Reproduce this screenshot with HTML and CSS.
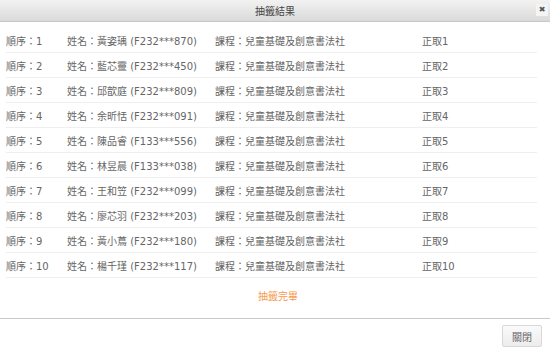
FILE: index.html
```html
<!DOCTYPE html>
<html lang="zh-Hant">
<head>
  <meta charset="UTF-8" />
  <title>抽籤結果</title>
  <link rel="stylesheet" href="styles.css">
</head>
<body>
  <div class="dialog">
    <div class="dialog-header">
      <span class="dialog-title">抽籤結果</span>
      <span class="dialog-close">✖</span>
    </div>
    <div class="dialog-body">
      <div class="result-list">
        <div class="result-row"><span class="col-no">順序：1</span><span class="col-name">姓名：黃姿瑀 (F232***870)</span><span class="col-course">課程：兒童基礎及創意書法社</span><span class="col-status">正取1</span></div>
        <div class="result-row"><span class="col-no">順序：2</span><span class="col-name">姓名：藍芯靈 (F232***450)</span><span class="col-course">課程：兒童基礎及創意書法社</span><span class="col-status">正取2</span></div>
        <div class="result-row"><span class="col-no">順序：3</span><span class="col-name">姓名：邱歆庭 (F232***809)</span><span class="col-course">課程：兒童基礎及創意書法社</span><span class="col-status">正取3</span></div>
        <div class="result-row"><span class="col-no">順序：4</span><span class="col-name">姓名：余昕恬 (F232***091)</span><span class="col-course">課程：兒童基礎及創意書法社</span><span class="col-status">正取4</span></div>
        <div class="result-row"><span class="col-no">順序：5</span><span class="col-name">姓名：陳品睿 (F133***556)</span><span class="col-course">課程：兒童基礎及創意書法社</span><span class="col-status">正取5</span></div>
        <div class="result-row"><span class="col-no">順序：6</span><span class="col-name">姓名：林昱晨 (F133***038)</span><span class="col-course">課程：兒童基礎及創意書法社</span><span class="col-status">正取6</span></div>
        <div class="result-row"><span class="col-no">順序：7</span><span class="col-name">姓名：王和笠 (F232***099)</span><span class="col-course">課程：兒童基礎及創意書法社</span><span class="col-status">正取7</span></div>
        <div class="result-row"><span class="col-no">順序：8</span><span class="col-name">姓名：廖芯羽 (F232***203)</span><span class="col-course">課程：兒童基礎及創意書法社</span><span class="col-status">正取8</span></div>
        <div class="result-row"><span class="col-no">順序：9</span><span class="col-name">姓名：黃小蔦 (F232***180)</span><span class="col-course">課程：兒童基礎及創意書法社</span><span class="col-status">正取9</span></div>
        <div class="result-row"><span class="col-no">順序：10</span><span class="col-name">姓名：楊千瑾 (F232***117)</span><span class="col-course">課程：兒童基礎及創意書法社</span><span class="col-status">正取10</span></div>
      </div>
      <div class="result-done">抽籤完畢</div>
    </div>
    <div class="dialog-footer">
      <button class="btn-close">關閉</button>
    </div>
  </div>
</body>
</html>
```

FILE: styles.css
```css
body {
  margin: 0;
  font-family: 'DejaVu Sans', 'Noto Sans CJK TC', sans-serif;
  font-size: 10px;
  color: #666;
  background-color: #fff;
}

.dialog {
  width: 550px;
  height: 359px;
  display: flex;
  flex-direction: column;
}

.dialog-header {
  height: 21px;
  border-bottom: 1px solid #c8c8c8;
  background: linear-gradient(to bottom, #f2f2f2, #dadada);
  display: flex;
  align-items: center;
  justify-content: center;
  position: relative;
}

.dialog-title {
  color: #444;
  font-size: 10px;
}

.dialog-close {
  position: absolute;
  right: 2px;
  top: 4px;
  width: 12px;
  height: 12px;
  background-color: #f4f4f4;
  color: #555;
  font-size: 8px;
  line-height: 12px;
  text-align: center;
}

.dialog-body {
  height: 297px;
  padding-top: 6px;
  border-bottom: 1px solid #c8c8c8;
  box-sizing: border-box;
}

.result-list {
  margin: 0 13px 0 6px;
}

.result-row {
  display: flex;
  align-items: center;
  height: 24px;
  border-bottom: 1px solid #efefef;
}

.col-no {
  width: 61px;
}

.col-name {
  width: 148px;
}

.col-course {
  width: 207px;
}

.result-done {
  padding-left: 6px;
  margin-top: 10px;
  text-align: center;
  color: #f79a4f;
}

.dialog-footer {
  display: flex;
  justify-content: flex-end;
  padding: 6px 8px 0 0;
}

.btn-close {
  width: 40px;
  height: 22px;
  padding: 0;
  border: 1px solid #d8d8d8;
  border-radius: 2px;
  background: linear-gradient(to bottom, #fafafa, #ececec);
  font-family: 'DejaVu Sans', 'Noto Sans CJK TC', sans-serif;
  font-size: 10px;
  color: #666;
}
```
